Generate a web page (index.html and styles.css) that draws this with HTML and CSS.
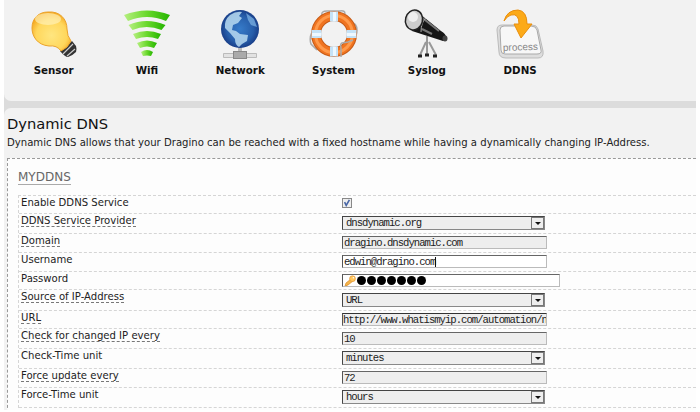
FILE: index.html
```html
<!DOCTYPE html>
<html lang="en">
<head>
<meta charset="utf-8">
<title>Dynamic DNS</title>
<link rel="stylesheet" href="styles.css">
</head>
<body>
<div class="page">
<nav class="toolbar">
  <a class="item"><svg viewBox="0 0 50 60"><defs><radialGradient id="bulb" cx=".5" cy=".6" r=".6"><stop offset="0" stop-color="#ffe680"/><stop offset=".65" stop-color="#ffd75c"/><stop offset="1" stop-color="#f4a41c"/></radialGradient></defs><path d="M31 51L43 41l4 5q1 3 0 6-4 4-8 5-3 0-8-6z" fill="#333"/><path d="M34 54l10-10m-13 5l9-8m-2 15l8-7" stroke="#ccc" stroke-width="1.2"/><path d="M19 12C31 11 38 19 38 29q0 7 4 12-3 7-10 10-4-6-12-5C8 45 3 36 3 28 3 18 10 12 19 12z" fill="url(#bulb)" stroke="#eba32b"/><ellipse cx="19" cy="19" rx="13" ry="6" fill="#fff2bd" opacity=".65"/></svg><span>Sensor</span></a>
  <a class="item"><svg viewBox="0 0 50 60"><defs><linearGradient id="green"><stop stop-color="#b6ef80"/><stop offset=".5" stop-color="#69d82b"/><stop offset="1" stop-color="#25b500"/></linearGradient></defs><g fill="url(#green)"><path d="M2 15q23-9 46 0l-4 6q-19-8-38 0z"/><path d="M6.500 25q18-8 37 0l-4 5q-15-6-29 0z"/><path d="M11 34q14-6 28 0l-3 5q-11-4-22 0z"/><path d="M15 43q10-5 20 0l-3 5q-7-3-14 0z"/><path d="M19 52q6-4 12 0l-2 4q-4-1-8 0z"/></g></svg><span>Wifi</span></a>
  <a class="item"><svg viewBox="0 0 50 60"><defs><radialGradient id="globe"><stop stop-color="#367bc9"/><stop offset=".7" stop-color="#275eaa"/><stop offset="1" stop-color="#193f89"/></radialGradient></defs><path d="M25 47v6" stroke="#bbb" stroke-width="4"/><path d="M8.500 53.500h33v4h-33z" fill="#e2e2e2" stroke="#bbb"/><rect x="18.500" y="51.500" width="13" height="7" fill="#aaa" stroke="#888"/><circle cx="25" cy="29" r="19" fill="url(#globe)"/><path d="M15 15q6-4 12-3l-3 4 3 2-4 5-5 2-1 5 4 1 4 3 8 1-1 6-5 3-3 3q-4-2-4-8l-5-6-5-5q-1-8 5-13z" fill="#b8dbf1" opacity=".85"/><path d="M31 13l8 6 3 8-6-2-3-5z" fill="#77ace0" opacity=".8"/></svg><span>Network</span></a>
  <a class="item"><svg viewBox="0 0 50 60"><path d="M13 15q-1-4 5-4h13q5-1 5 3M13 15L11 23 3 32q-3 6-1 12l6 6M40 21q8 2 8 9t-4 9" fill="none" stroke="#aaa" stroke-width="1.5"/><circle cx="25" cy="34" r="18" fill="none" stroke="#c65b17" stroke-width="10"/><circle cx="25" cy="34" r="18" fill="none" stroke="#f07420" stroke-width="8"/><circle cx="25" cy="34" r="18.500" fill="none" stroke="#ff9a4b" stroke-width="3"/><path d="M21 11.500h8v10h-8zm0 35h8v10h-8zM2.500 30h10v8h-10zm35 0h10v8h-10z" fill="#c5e2f6"/><path d="M24 12h3v9h-3zm0 35h3v9h-3zM3 33h9v3H3zm35 0h9v3h-9z" fill="#eef8ff"/><path d="M44 40l-5 2-6 1q-2 1-1 5v9" fill="none" stroke="#aaa" stroke-width="1.5"/></svg><span>System</span></a>
  <a class="item"><svg viewBox="0 0 50 60"><path d="M25 36v20m-1-14l-6 13m9-13l7 13" fill="none" stroke="#999" stroke-width="2"/><path d="M13 10L39 31q5 3 5 6 0 4-3 4L10 31z" fill="#161616"/><path d="M18 16l19 15M20 29l10 5" stroke="#777" stroke-width="2"/><path d="M24 18q-5 4-5 14" fill="none" stroke="#aaa"/><ellipse cx="12" cy="20" rx="8.500" ry="10" transform="rotate(15 12 20)" fill="#ccc" stroke="#222" stroke-width="1.5"/><ellipse cx="11" cy="17" rx="5" ry="5" fill="#eee"/><ellipse cx="43" cy="38.500" rx="2.500" ry="3" fill="#444"/><path d="M16 56h4m3-1h4m4 1h4" stroke="#222" stroke-width="3"/></svg><span>Syslog</span></a>
  <a class="item"><svg viewBox="0 0 50 60"><path d="M7 25h30q5 0 6 4l5 22q1 7-5 7H11q-7 0-7-6L2 30q0-5 5-5z" fill="#ddd" stroke="#bbb"/><path d="M9 26h27q5 0 6 4l4 20q1 4-4 4H10q-4 0-4-4L5 30q0-4 4-4z" fill="#f7f7f7" stroke="#aaa"/><text class="iconword" x="8" y="51" transform="rotate(-2 8 51)">process</text><path d="M9 21q3-11 14-11 9 1 9 14h5L26 38l-7-14h5q0-11-8-9-4 1-7 6z" fill="#fcaa18" stroke="#e98e0c"/></svg><span>DDNS</span></a>
</nav>
<main>
  <h1>Dynamic DNS</h1>
  <p>Dynamic DNS allows that your Dragino can be reached with a fixed hostname while having a dynamically changing IP-Address.</p>
  <section>
    <h2><a>MYDDNS</a></h2>
    <div class="rows">
      <div class="row r18"><label>Enable DDNS Service</label><span class="check"><svg viewBox="0 0 10 10"><path d="M2 4l2 4 4-7" fill="none" stroke="#4866a5" stroke-width="2"/></svg></span></div>
      <div class="row r20"><label><abbr>DDNS Service Provider</abbr></label><div class="field select">dnsdynamic.org<i></i></div></div>
      <div class="row r19"><label><abbr>Domain</abbr></label><div class="field">dragino.dnsdynamic.com</div></div>
      <div class="row r19"><label>Username</label><div class="field white">edwin@dragino.com<b></b></div></div>
      <div class="row r18"><label>Password</label><div class="field white password"><svg viewBox="0 0 12 12"><path d="M1 11l1-3 5-4 2 2-5 4H3v1z" fill="#f6b64b" stroke="#d88a27" stroke-width=".7"/><circle cx="8.5" cy="3.7" r="2.9" fill="#ffc65d" stroke="#e19335" stroke-width=".7"/><circle cx="9.4" cy="2.8" r=".8" fill="#fff"/></svg><span class="dots"><u></u><u></u><u></u><u></u><u></u><u></u><u></u></span></div></div>
      <div class="row r21"><label><abbr>Source of IP-Address</abbr></label><div class="field select low">URL<i></i></div></div>
      <div class="row r18"><label><abbr>URL</abbr></label><div class="field dark">http://www.whatismyip.com/automation/n</div></div>
      <div class="row r20"><label><abbr>Check for changed IP every</abbr></label><div class="field low">10</div></div>
      <div class="row r20"><label>Check-Time unit</label><div class="field select">minutes<i></i></div></div>
      <div class="row r19"><label><abbr>Force update every</abbr></label><div class="field">72</div></div>
      <div class="row r20"><label>Force-Time unit</label><div class="field select">hours<i></i></div></div>
    </div>
  </section>
</main>
</div>
</body>
</html>
```
FILE: styles.css
```css
* { box-sizing: border-box; }
body { margin: 0; background: #fff; overflow: hidden; font-family: "DejaVu Sans", Verdana, sans-serif; color: #222; }
.page { width: 692px; height: 410px; margin-left: 4px; background: #dcdcdc; overflow: hidden; }
.toolbar { height: 101px; background: #f2f2f2; border-radius: 0 0 0 7px; display: flex; padding-left: 3px; }
.item { width: 93.3px; display: flex; flex-direction: column; align-items: center; font-size: 10.3px; font-weight: bold; line-height: 14px; color: #111; }
.item svg { width: 50px; height: 60px; margin-bottom: 3px; }
.iconword { font: 10px "Liberation Sans", sans-serif; fill: #888; }
main { height: 302px; margin-top: 7px; background: #f2f2f2; border-radius: 7px 0 0 0; padding: 6px 0 0 3px; }
h1 { font-size: 14.7px; line-height: 20px; font-weight: normal; margin: 0; color: #111; }
p { font-size: 10.1px; line-height: 14px; margin: 2px 0 8px; white-space: nowrap; }
section { height: 260px; border: 1px dashed #999; border-right: 0; background: #fdfdfd; padding: 10px 0 0 10px; }
h2 { margin: 0 0 10px; font-size: 12px; line-height: 16px; font-weight: normal; color: #666; }
h2 a { border-bottom: 1px solid #aaa; display: inline-block; line-height: 14px; }
.rows { border-top: 1px dashed #d5d5d5; border-left: 1px dashed #d5d5d5; }
.row { display: flex; border-bottom: 1px dashed #d5d5d5; padding-left: 2px; }
.r18 { height: 18px; } .r19 { height: 19px; } .r20 { height: 20px; } .r21 { height: 21px; }
label { width: 321px; font-size: 10.1px; line-height: 13px; white-space: nowrap; }
abbr { display: inline-block; height: 13px; border-bottom: 1px dashed #777; }
.check { width: 10px; height: 10px; margin-top: 2px; border: 1px solid #888; background: #eee; display: flex; }
.check svg { width: 8px; height: 8px; }
.field { position: relative; flex: none; width: 205px; height: 13px; margin-top: 2px; border: 1px solid #bbb; border-top-color: #666; border-left-color: #555; background: #eee; font: 10.6px/12px "Liberation Mono", monospace; letter-spacing: -.99px; padding-left: 1px; white-space: nowrap; overflow: hidden; color: #222; }
.select { width: 203px; height: 14px; line-height: 13px; padding-left: 3px; border-color: #444 #888 #888 #444; }
.low { margin-top: 3px; }
.select i { position: absolute; right: 0; top: 0; width: 13px; height: 12px; border: 1px solid #777; background: #eee; }
.select i::after { content: ""; position: absolute; left: 3px; top: 4px; border: 3px solid transparent; border-top-color: #111; border-bottom: 0; }
.white { background: #fff; }
.white b { display: inline-block; height: 10px; width: 1px; background: #111; vertical-align: middle; }
.dark { border-top-color: #333; padding-left: 0; }
.password { width: 218px; display: flex; align-items: center; }
.password svg { width: 12px; height: 12px; }
.dots { display: flex; gap: 1px; margin-left: 1px; }
.dots u { width: 9px; height: 9px; border-radius: 50%; background: #000; }
```
